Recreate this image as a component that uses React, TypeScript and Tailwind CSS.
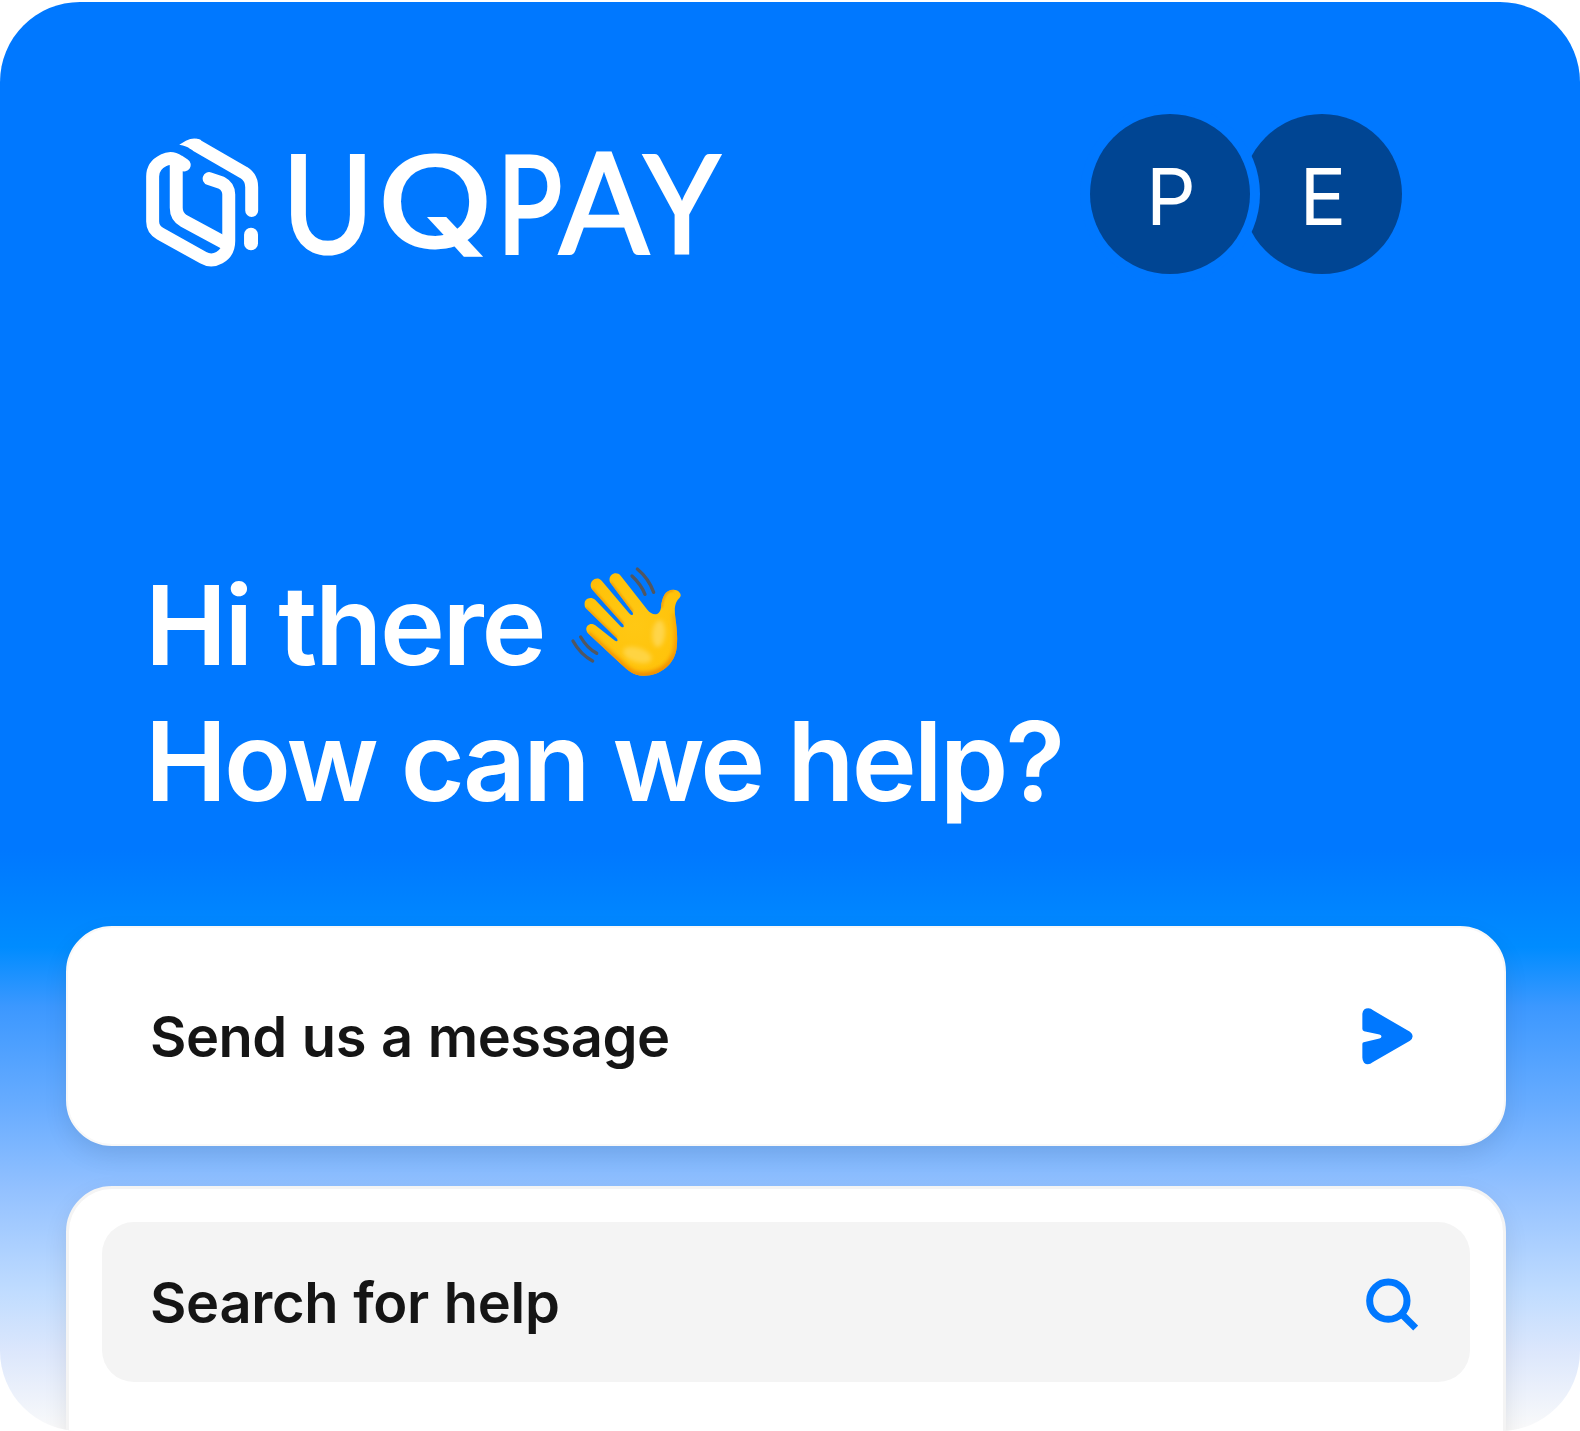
import type { ReactNode } from 'react';

function LogoMark() {
  return (
    <svg viewBox="48 50 340 392" className="h-[131px] w-[113px] shrink-0" fill="none" aria-hidden="true">
      <g stroke="#fff" strokeWidth="39" strokeLinecap="round" strokeLinejoin="round">
        <path d="M163 133L146 122Q124 107 101 119Q68 135 68 168V303Q68 327 91 340L220 412Q244 426 269 412Q297 396 297 362V222Q297 198 276 187L238 174" />
        <path d="M139 132V262Q139 288 161 301L285 368" />
        <path d="M200 74L342 156Q366 171 366 200V270" />
      </g>
      <path d="M148 72L168 60Q192 48 214 58L205 96L180 84Q172 76 148 72Z" fill="#fff" />
      <rect x="343" y="322" width="42" height="68" rx="21" fill="#fff" />
    </svg>
  );
}

const wordmark = [
  { char: 'U', transform: 'translate(41 98) scale(0.92 1)', font: 'font-[Lato]' },
  { char: 'Q', transform: 'translate(148 91.5) scale(1.14 0.92)', font: 'font-[Inter]' },
  { char: 'P', transform: 'translate(242.5 97.5) scale(0.81 1)', font: 'font-[Lato]' },
  { char: 'A', transform: 'translate(317 97.5) scale(0.98 1.03)', font: 'font-[Lato]' },
  { char: 'Y', transform: 'translate(395 97.5) scale(0.9 1)', font: 'font-[Lato]' },
];

function Wordmark() {
  return (
    <svg
      viewBox="0 0 440 110"
      className="ml-[28px] mt-[18px] h-[110px] w-[440px] overflow-visible text-[135px] font-normal"
      fill="#fff"
      stroke="#fff"
      strokeWidth="3"
      textAnchor="middle"
    >
      {wordmark.map(({ char, transform, font }) => (
        <text key={char} transform={transform} className={font}>
          {char}
        </text>
      ))}
    </svg>
  );
}

function WavingHand() {
  return (
    <svg viewBox="0 0 405 390" className="mb-[10px] h-[130px] w-[135px]" fill="none" aria-label="waving hand">
      <defs>
        <radialGradient id="skin" gradientUnits="userSpaceOnUse" cx="225" cy="210" r="210">
          <stop offset="0" stopColor="#ffc814" />
          <stop offset="0.7" stopColor="#ffc30a" />
          <stop offset="1" stopColor="#fdb508" />
        </radialGradient>
        <linearGradient id="edge" gradientUnits="userSpaceOnUse" x1="240" y1="190" x2="270" y2="365">
          <stop offset="0.1" stopColor="#f39200" stopOpacity="0.5" />
          <stop offset="1" stopColor="#ee8500" />
        </linearGradient>
        <filter id="soft" x="-50%" y="-50%" width="200%" height="200%">
          <feGaussianBlur stdDeviation="7" />
        </filter>
        <filter id="finger" x="-20%" y="-20%" width="140%" height="140%">
          <feGaussianBlur stdDeviation="3" />
        </filter>
        <clipPath id="hand">
          <path d="M150 82C142 60 168 45 182 62L262 164C276 182 299 184 303 158C306 128 314 104 341 104C356 104 367 118 360 127C345 142 342 157 346 187C349 211 354 242 350 278C345 326 302 362 252 362C222 363 204 347 183 327L84 235C70 219 87 198 106 211L163 256C171 263 176 257 170 250L77 159C64 141 86 118 106 135L180 212C188 221 195 216 189 208L96 103C82 84 107 59 125 77L206 173C215 184 223 181 217 171Z" />
        </clipPath>
      </defs>
      <g clipPath="url(#hand)">
        <rect width="405" height="390" fill="url(#skin)" />
        <path d="M84 235L183 327Q212 361 252 361Q330 354 349 285Q356 246 344 175" stroke="url(#edge)" strokeWidth="18" filter="url(#soft)" />
        <ellipse cx="296" cy="236" rx="19" ry="40" fill="#ffd54a" filter="url(#soft)" transform="rotate(5 296 236)" />
        <ellipse cx="232" cy="300" rx="44" ry="22" fill="#ffd443" filter="url(#soft)" transform="rotate(18 232 300)" />
        <path
          d="M84 235L183 327M77 159L170 250M96 103L189 208M150 82L217 171M303 158Q308 104 341 104"
          stroke="#f09a08"
          strokeWidth="9"
          filter="url(#finger)"
        />
      </g>
      <g stroke="#505762" strokeWidth="10" strokeLinecap="round">
        <path d="M232 42Q266 70 281 112" />
        <path d="M216 63Q243 88 255 118" />
        <path d="M39 258Q61 298 98 318" />
        <path d="M62 246Q81 279 110 295" />
      </g>
    </svg>
  );
}

function SendIcon() {
  return (
    <svg viewBox="0 0 150 170" className="h-[57px] w-[51px]" fill="#0078ff" aria-hidden="true">
      <path d="M0 17Q2 1 18 1Q26 1 32 7L142 71Q158 84 142 98L32 161Q16 174 5 163Q0 157 0 148V107Q0 103 4 102L51 91Q57 89 57 85Q57 81 51 79L5 69Q0 67 0 62Z" />
    </svg>
  );
}

function SearchIcon() {
  return (
    <svg viewBox="0 0 156 159" className="mt-[5px] h-[53px] w-[52px]" fill="none" stroke="#0078ff" aria-hidden="true">
      <circle cx="67" cy="68" r="56" strokeWidth="21" />
      <path d="M106 107L149 150" strokeWidth="21" />
    </svg>
  );
}

function Avatar({ children, className }: { children: ReactNode; className: string }) {
  return (
    <div
      className={`flex size-[160px] items-center justify-center rounded-full bg-[#004593] pl-[2px] pt-[5px] text-[78px] leading-none text-white ${className}`}
    >
      {children}
    </div>
  );
}

export default function App() {
  return (
    <div className="h-[1431px] w-[1580px] overflow-hidden bg-white pt-[2px] font-['Inter',sans-serif]">
      <div className="flex h-[1429px] flex-col overflow-hidden rounded-[80px] bg-[linear-gradient(to_bottom,#0078ff_0px,#0078ff_848px,#008cff_945px,#3c98ff_1005px,#6aadff_1108px,#93c1ff_1188px,#c0dcff_1290px,#dce7fc_1350px,#fafafa_1429px)]">
        {/* Brand and agents */}
        <header className="flex h-[300px] shrink-0 items-start pl-[146px] pr-[178px]">
          <div className="flex items-start pt-[135px]">
            <LogoMark />
            <Wordmark />
          </div>
          <div className="ml-auto flex pt-[112px]">
            <Avatar className="relative z-10 shadow-[0_0_0_10px_#0078ff]">P</Avatar>
            <Avatar className="-ml-[8px]">E</Avatar>
          </div>
        </header>

        {/* Greeting */}
        <div className="flex h-[624px] shrink-0 flex-col pl-[145px] pt-[255px] text-[110px] font-semibold leading-[136px] text-white">
          <div className="flex h-[136px] items-center">
            <span className="w-[415px] whitespace-nowrap tracking-[-2.4px] [word-spacing:2px]">Hi there</span>
            <WavingHand />
          </div>
          <div className="whitespace-nowrap tracking-[-2.9px]">How can we help?</div>
        </div>

        <main className="flex flex-col gap-[40px] pl-[66px] pr-[74px] text-[56px] font-semibold text-[#151515]">
          <button className="flex h-[220px] items-center justify-between rounded-[46px] border-2 border-[#f8f8f8] bg-white pl-[82px] pr-[91px] shadow-[0_10px_26px_-2px_rgba(0,0,0,0.1)]">
            <span className="pt-[1px] tracking-[-0.5px] [word-spacing:1.5px]">Send us a message</span>
            <SendIcon />
          </button>
          <section className="h-[300px] rounded-[46px] border-[3px] border-[#f4f4f4] bg-white px-[33px] pt-[33px] shadow-[0_10px_26px_-2px_rgba(0,0,0,0.1)]">
            <button className="flex h-[160px] w-full items-center justify-between rounded-[32px] bg-[#f4f4f4] pl-[48px] pr-[52px]">
              <span className="pt-[1px] tracking-[-0.3px] [word-spacing:1px]">Search for help</span>
              <SearchIcon />
            </button>
          </section>
        </main>
      </div>
    </div>
  );
}
